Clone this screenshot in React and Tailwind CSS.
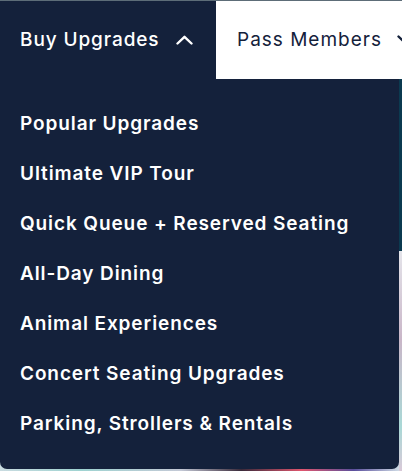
const ITEMS = [
  "Popular Upgrades",
  "Ultimate VIP Tour",
  "Quick Queue + Reserved Seating",
  "All-Day Dining",
  "Animal Experiences",
  "Concert Seating Upgrades",
  "Parking, Strollers & Rentals",
];

function Chevron({ up }) {
  return (
    <svg width="17" height="10" viewBox="0 0 17 10" fill="none" className="shrink-0">
      <path
        d={up ? "M1.5 8.5L8.5 1.8L15.5 8.5" : "M1.5 1.5L8.5 8.2L15.5 1.5"}
        stroke="currentColor"
        strokeWidth="2.4"
        strokeLinecap="round"
        strokeLinejoin="round"
      />
    </svg>
  );
}

export default function App() {
  return (
    <div
      className="relative h-[471px] w-[402px] overflow-hidden bg-[linear-gradient(90deg,#c9dbe0_0%,#9fd3d1_20%,#c4c9d6_45%,#3a2a3a_60%,#e0566e_75%,#5a4f9c_88%,#d6e4ea_100%)]"
      style={{ fontFamily: "Inter, 'Noto Sans', sans-serif" }}
    >
      <div className="absolute right-0 top-[79px] h-[172px] w-[3px] bg-[#0b3a50]" />
      <div className="absolute right-0 top-[251px] h-[220px] w-[3px] bg-[linear-gradient(180deg,#e4e4ea,#c9b6c8_40%,#a9d8d6_80%,#d9c9d8)]" />

      <div className="relative flex flex-col">
        <div className="h-px bg-[#5d6d78]" />
        <div className="flex h-[78px] w-[402px]">
          <div className="flex w-[216px] items-center gap-[17px] bg-[#14213b] pl-5 text-white">
            <span className="text-[19px] font-medium tracking-[0.9px]">Buy Upgrades</span>
            <Chevron up />
          </div>
          <div className="flex flex-1 items-center gap-[15px] overflow-hidden whitespace-nowrap bg-white pl-[21px] text-[#14213b]">
            <span className="text-[19px] font-normal tracking-[1px]">Pass Members</span>
            <Chevron />
          </div>
        </div>
        <ul className="w-[399px] rounded-b-[7px] bg-[#14213b] pb-5 pt-5 text-white">
          {ITEMS.map((item) => (
            <li key={item} className="whitespace-nowrap pl-5 text-[19px] font-semibold leading-[50px] tracking-[0.9px]">
              {item}
            </li>
          ))}
        </ul>
      </div>
    </div>
  );
}
